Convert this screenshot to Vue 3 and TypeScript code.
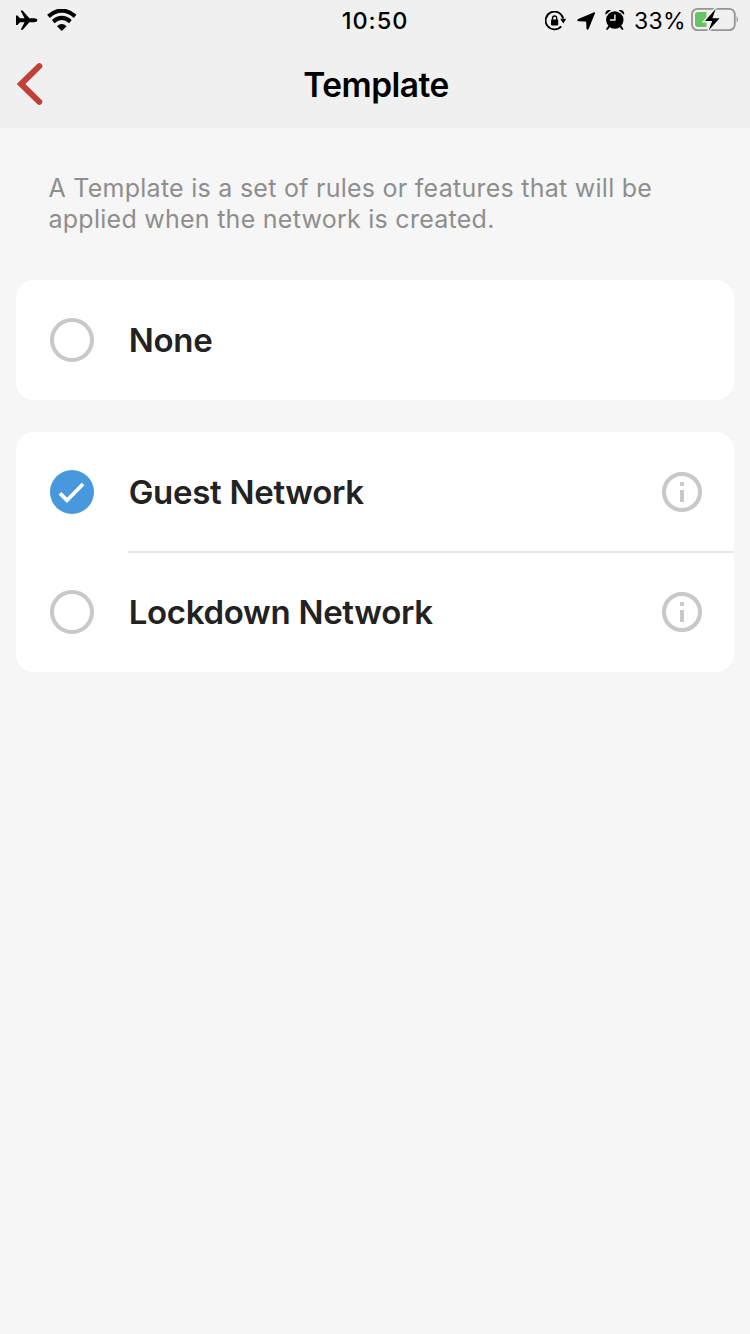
<script setup lang="ts">
import { ref } from 'vue'

interface TemplateOption {
  id: string
  label: string
  info: boolean
}

const groups: TemplateOption[][] = [
  [{ id: 'none', label: 'None', info: false }],
  [
    { id: 'guest', label: 'Guest Network', info: true },
    { id: 'lockdown', label: 'Lockdown Network', info: true },
  ],
]

const selected = ref<string>('guest')
</script>

<template>
  <div class="screen">
    <header class="header">
      <div class="status">
        <div class="status-left">
          <svg class="plane" width="22" height="20" viewBox="0 0 22 20">
            <path d="M0 5.4H1.5L4 8.2H8.6L4.9 1.2Q4.6 .6 5.2 .6H6.2Q6.8 .6 7.2 1.2L13.4 8.2H18.4Q21.5 8.6 21.5 10.2Q21.5 11.8 18.4 12.2H13.4L7.2 19.2Q6.8 19.8 6.2 19.8H5.2Q4.6 19.8 4.9 19.2L8.6 12.2H4L1.5 15H0Z" />
          </svg>
          <svg class="wifi" width="30" height="22" viewBox="0 0 30 22">
            <path d="M1.5 7.3Q14.8 -4 28.1 7.3" fill="none" stroke="#000" stroke-width="4.2" />
            <path d="M6.2 12.6Q14.8 5.3 23.4 12.6" fill="none" stroke="#000" stroke-width="4.1" />
            <path d="M10 17.2Q14.8 13 19.6 17.2L14.8 21.9Z" />
          </svg>
        </div>
        <span class="time">10:50</span>
        <div class="status-right">
          <svg class="lock" width="22" height="20" viewBox="0 0 22 20">
            <path d="M16.2 15.4A8.9 8.9 0 1 1 18.2 7.5" fill="none" stroke="#000" stroke-width="1.8" />
            <path d="M15.3 7.8H21.2L18.3 12.4Z" />
            <rect x="6" y="8.4" width="7.2" height="6" rx=".8" />
            <path d="M7.5 9V7.2Q7.5 5 9.6 5T11.7 7.2V9" fill="none" stroke="#000" stroke-width="1.4" />
          </svg>
          <svg class="arrow" width="19" height="19" viewBox="0 0 19 19">
            <path d="M16.6.4Q18.7 -.5 17.9 1.6L11.7 16.8Q10.6 18.9 9.5 16.8L9.2 10.6Q9.1 9.7 8.2 9.6L1.4 9.2Q-1 8.5 1.2 7.1Z" />
          </svg>
          <svg class="alarm" width="20" height="21" viewBox="0 0 20 21">
            <circle cx="9.8" cy="10" r="8.7" />
            <path d="M.6 4.8Q-.2 2.4 1.8 .8T6 .3ZM19 4.8Q19.8 2.4 17.8 .8T13.6 .3Z" />
            <path d="M4.2 16.4L2.2 18.9M15.4 16.4L17.4 18.9" stroke="#000" stroke-width="1.9" stroke-linecap="round" />
            <path d="M9.9 4.4V10H4.9" fill="none" stroke="#f0f0f0" stroke-width="1.4" />
          </svg>
          <span class="percent">33%</span>
          <svg class="battery" width="48" height="26" viewBox="0 0 48 26">
            <rect x="1" y="2.9" width="42.8" height="21.2" rx="5.5" fill="none" stroke="#949494" stroke-width="1.8" />
            <path d="M45.6 10Q48.4 13.4 45.6 16.7Z" fill="#949494" />
            <path d="M7 6H15.5V21H7Q4 21 4 18V9Q4 6 7 6Z" fill="#65c466" />
            <path d="M24.6 2.2L13.4 15.3H20.6L17.4 24.9L29.2 11.8H21.8Z" stroke="#f0f0f0" stroke-width="2.4" />
            <path d="M24.8 2.7L14 15H21.2L17.6 24.5L28.6 12.2H21.4Z" />
          </svg>
        </div>
      </div>
      <nav class="nav">
        <button class="back" aria-label="Back">
          <svg width="26" height="42" viewBox="0 0 26 42">
            <path d="M22.3 3.2L4 21L22.3 38.8" fill="none" stroke="#bf4138" stroke-width="6" stroke-linecap="round" />
          </svg>
        </button>
        <h1 class="title">Template</h1>
      </nav>
    </header>

    <main class="content">
      <p class="intro">A Template is a set of rules or features that will be<br />applied when the network is created.</p>
      <section v-for="(group, i) in groups" :key="i" class="card">
        <div v-for="option in group" :key="option.id" class="row" @click="selected = option.id">
          <svg v-if="selected === option.id" class="radio" width="44" height="44" viewBox="0 0 44 44">
            <circle cx="22" cy="22" r="22" fill="#4898de" />
            <path d="M10 23.4L17 30.4L33.1 14" fill="none" stroke="#fff" stroke-width="3.8" />
          </svg>
          <svg v-else class="radio" width="44" height="44" viewBox="0 0 44 44">
            <circle cx="22" cy="22" r="20" fill="none" stroke="#c7c7cc" stroke-width="4" />
          </svg>
          <div class="row-body">
            <span class="label">{{ option.label }}</span>
            <svg v-if="option.info" width="40" height="40" viewBox="0 0 40 40">
              <circle cx="20" cy="20" r="18" fill="none" stroke="#c7c7cc" stroke-width="4" />
              <path d="M18 10H22V14H18ZM18 18H22V30H18Z" fill="#c7c7cc" />
            </svg>
          </div>
        </div>
      </section>
    </main>
  </div>
</template>

<style>
body {
  margin: 0;
  background: #f6f6f6;
}
</style>

<style scoped>
.screen {
  width: 750px;
  height: 1334px;
  overflow: hidden;
  background: #f6f6f6;
  font-family: Inter, "Liberation Sans", sans-serif;
}
svg {
  display: block;
  flex: none;
}
.header {
  height: 128px;
  background: #f0f0f0;
  color: #000;
}
.status {
  display: grid;
  grid-template-columns: 1fr auto 1fr;
  height: 40px;
}
.status-left,
.status-right {
  display: flex;
  align-items: flex-start;
}
.status-left {
  padding-left: 16px;
}
.plane {
  margin-top: 10px;
}
.wifi {
  margin: 9px 0 0 9px;
}
.time {
  font-size: 23.5px;
  font-weight: 550;
  line-height: 41px;
  letter-spacing: 1px;
}
.status-right {
  justify-content: flex-end;
  padding-right: 11px;
}
.lock {
  margin-top: 11px;
}
.arrow {
  margin: 12px 0 0 10px;
}
.alarm {
  margin: 10px 0 0 9px;
}
.percent {
  width: 53px;
  margin-left: 9px;
  font-size: 23px;
  line-height: 42px;
  letter-spacing: 0.3px;
  white-space: nowrap;
}
.battery {
  margin: 6px 0 0 4px;
}
.nav {
  display: grid;
  grid-template-columns: 60px 1fr 60px;
  align-items: center;
  height: 88px;
}
.back {
  padding: 0 0 0 17px;
  border: 0;
  background: none;
}
.title {
  margin: 0;
  padding: 1px 0 0 2px;
  text-align: center;
  font-size: 33.5px;
  font-weight: 600;
  line-height: 86px;
  letter-spacing: -0.5px;
}
.content {
  padding: 45px 16px 0;
}
.intro {
  height: 107px;
  margin: 0 0 0 32.5px;
  color: #8e8e8e;
  font-size: 25px;
  line-height: 31px;
  letter-spacing: 0.26px;
  white-space: nowrap;
}
.card {
  margin-bottom: 32px;
  border-radius: 18px;
  background: #fff;
}
.row {
  display: flex;
  align-items: center;
  gap: 34px;
  height: 120px;
  padding-left: 34px;
}
.row-body {
  position: relative;
  display: flex;
  flex: 1;
  align-items: center;
  justify-content: space-between;
  box-sizing: border-box;
  height: 120px;
  padding: 0 32px 0 0.7px;
}
.row:not(:last-child) .row-body::after {
  content: "";
  position: absolute;
  right: 0;
  bottom: -1px;
  left: 0;
  height: 2px;
  background: #e5e5ea;
}
.label {
  color: #222;
  font-size: 33px;
  font-weight: 600;
  letter-spacing: -0.3px;
  white-space: nowrap;
}
</style>
